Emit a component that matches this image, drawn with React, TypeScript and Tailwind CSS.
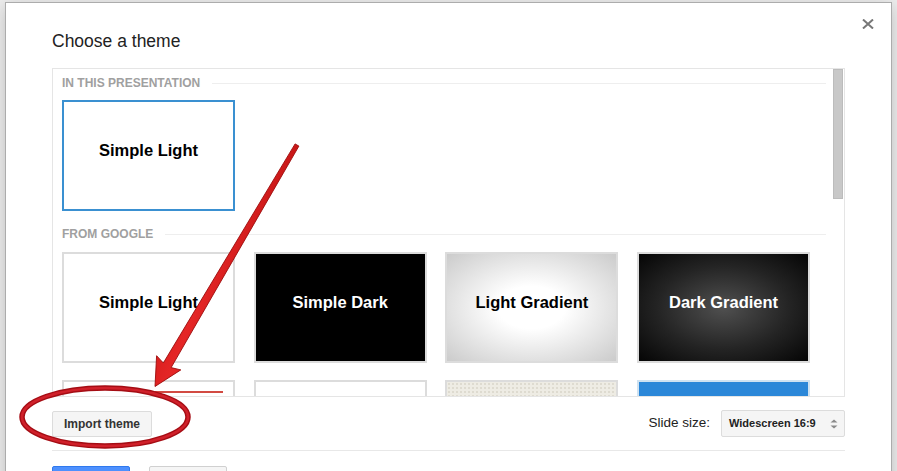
import React from 'react';

type Tile = {
  label?: string;
  inner: string;
  text?: string;
  border?: string;
  extra?: React.ReactNode;
};

const googleThemes: Tile[] = [
  { label: 'Simple Light', inner: 'bg-white', text: 'text-black' },
  { label: 'Simple Dark', inner: 'bg-black', text: 'text-white' },
  {
    label: 'Light Gradient',
    inner: 'bg-[radial-gradient(ellipse_at_center,#ffffff_28%,#cbcbcb_100%)]',
    text: 'text-black',
  },
  {
    label: 'Dark Gradient',
    inner: 'bg-[radial-gradient(ellipse_at_center,#505050_0%,#242424_55%,#050505_100%)]',
    text: 'text-white',
  },
  {
    inner: 'bg-white',
    extra: <div className="absolute left-[91px] right-[10px] top-[9px] h-[1.5px] bg-[#d24a42]" />,
  },
  { inner: 'bg-white' },
  {
    inner:
      'bg-[#eeece4] bg-[radial-gradient(#dedbd0_1px,transparent_1px)] bg-[length:4px_4px]',
  },
  { inner: 'bg-[#2b87d8]', border: 'border-[#cfe2f1]' },
];

function ThemeTile({ tile, selected }: { tile: Tile; selected?: boolean }) {
  const border = selected ? 'border-[#3a90d1]' : tile.border ?? 'border-[#dcdcdc]';
  return (
    <div className={`w-[173px] h-[111px] border-2 ${border}`}>
      <div className={`relative w-full h-full flex items-center justify-center pb-[10px] ${tile.inner}`}>
        {tile.label && (
          <span className={`text-[16.5px] leading-none font-bold ${tile.text}`}>{tile.label}</span>
        )}
        {tile.extra}
      </div>
    </div>
  );
}

function SectionHeader({ title }: { title: string }) {
  return (
    <div className="flex items-center gap-[12px]">
      <span className="text-[12px] leading-[14px] font-bold text-[#a0a0a0] whitespace-nowrap">{title}</span>
      <div className="flex-1 h-px bg-[#eeeeee]" />
    </div>
  );
}

function Annotation() {
  return (
    <svg
      className="absolute left-0 top-0 pointer-events-none"
      width={897}
      height={471}
      viewBox="0 0 897 471"
    >
      <defs>
        <linearGradient id="arrowFill" x1="0" y1="0" x2="1" y2="0.6">
          <stop offset="0" stopColor="#b40808" />
          <stop offset="0.5" stopColor="#e52626" />
          <stop offset="1" stopColor="#a80606" />
        </linearGradient>
      </defs>
      {/* arrow */}
      <polygon
        points="295.1,143.9 163.3,363 156.6,355.7 155,386.5 180.8,369.9 171.1,367.6 298.9,146.1"
        fill="url(#arrowFill)"
        stroke="#9c0a0a"
        strokeWidth={0.9}
        strokeLinejoin="round"
      />
      {/* ellipse round the import button */}
      <ellipse cx={105} cy={417} rx={83} ry={29} fill="none" stroke="#a50d14" strokeWidth={5.5} />
      <ellipse cx={105} cy={417} rx={83} ry={29} fill="none" stroke="#d0202a" strokeWidth={2.6} />
    </svg>
  );
}

export default function App() {
  return (
    <div className="relative w-[897px] h-[471px] overflow-hidden bg-[#ededed] font-['Liberation_Sans',Arial,sans-serif]">
      <div className="relative ml-[5px] mt-[2px] w-[887px] h-[520px] bg-white border border-[#acacac] shadow-[0_4px_16px_rgba(0,0,0,0.2)] pl-[46px] pr-[46px] pt-[26px]">
        <button className="absolute right-[17px] top-[16px] w-[12px] h-[10px]">
          <svg width={12} height={10} viewBox="0 0 12 10">
            <path d="M1 0.5 L11 9.5 M11 0.5 L1 9.5" stroke="#777777" strokeWidth={2} />
          </svg>
        </button>

        <h1 className="text-[17.5px] leading-[24px] text-[#222222]">Choose a theme</h1>

        <div className="mt-[15px] h-[329px] border border-[#e5e5e5] flex">
          <div className="flex-1 overflow-hidden pl-[9px] pr-[7px] pt-[7px]">
            <SectionHeader title="IN THIS PRESENTATION" />
            <div className="mt-[10px]">
              <ThemeTile tile={googleThemes[0]} selected />
            </div>

            <div className="mt-[16px]">
              <SectionHeader title="FROM GOOGLE" />
            </div>
            <div className="mt-[11px] grid grid-cols-[repeat(4,173px)] gap-x-[18.7px] gap-y-[17px]">
              {googleThemes.map((t, i) => (
                <ThemeTile key={i} tile={t} />
              ))}
            </div>
          </div>
          <div className="w-[11px]">
            <div className="w-[10px] h-[130px] bg-[#c8c8c8] border border-[#bcbcbc]" />
          </div>
        </div>

        <div className="mt-[13px] h-[27px] flex items-center justify-between">
          <button className="w-[100px] h-[26px] bg-[#f5f5f5] border border-[#dcdcdc] rounded-[2px] text-[12px] font-bold text-[#333333]">
            Import theme
          </button>
          <div className="flex items-center gap-[11px]">
            <span className="text-[13.5px] text-[#222222]">Slide size:</span>
            <div className="w-[124px] h-[27px] bg-[#f5f5f5] border border-[#dcdcdc] rounded-[2px] flex items-center justify-between pl-[7px] pr-[6px]">
              <span className="text-[11px] font-bold text-[#222222]">Widescreen 16:9</span>
              <svg width={8} height={10} viewBox="0 0 8 10">
                <path d="M0.5 3.6 L4 0.4 L7.5 3.6 Z M0.5 6.4 L4 9.6 L7.5 6.4 Z" fill="#8a8a8a" />
              </svg>
            </div>
          </div>
        </div>

        <div className="mt-[13px] h-px bg-[#e8e8e8]" />

        <div className="mt-[15px] flex gap-[19px]">
          <button className="w-[78px] h-[28px] bg-[#4d90fe] border border-[#3079ed] rounded-[2px]" />
          <button className="w-[78px] h-[28px] bg-[#f5f5f5] border border-[#d0d0d0] rounded-[2px]" />
        </div>
      </div>
      <Annotation />
    </div>
  );
}
